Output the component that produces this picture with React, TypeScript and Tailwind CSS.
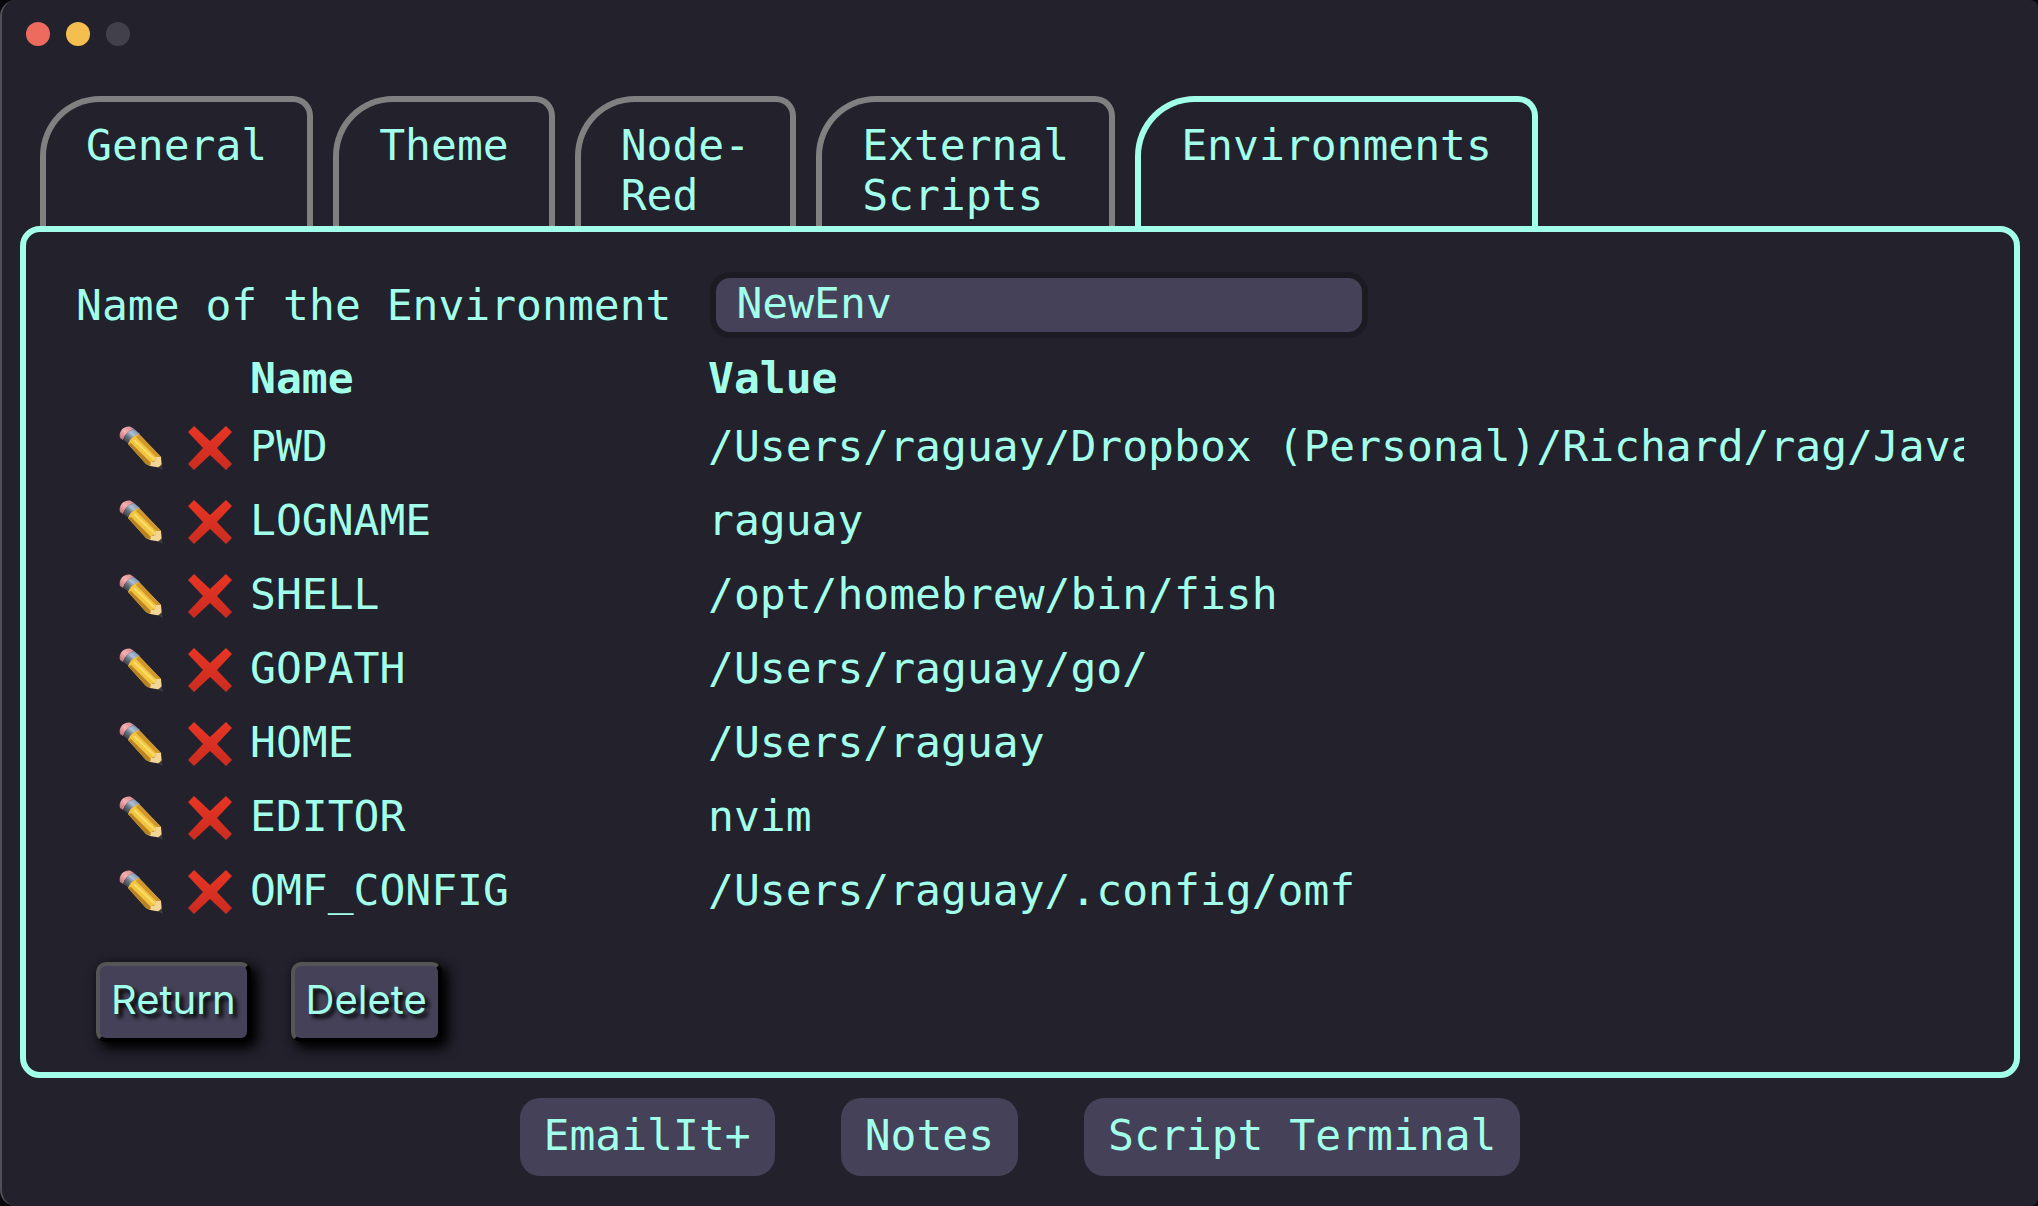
const tabs = ["General", "Theme", "Node-Red", "External Scripts", "Environments"];

const variables = [
  { name: "PWD", value: "/Users/raguay/Dropbox (Personal)/Richard/rag/JavaScript" },
  { name: "LOGNAME", value: "raguay" },
  { name: "SHELL", value: "/opt/homebrew/bin/fish" },
  { name: "GOPATH", value: "/Users/raguay/go/" },
  { name: "HOME", value: "/Users/raguay" },
  { name: "EDITOR", value: "nvim" },
  { name: "OMF_CONFIG", value: "/Users/raguay/.config/omf" },
];

const links = ["EmailIt+", "Notes", "Script Terminal"];

function PencilIcon() {
  return (
    <svg viewBox="0 0 44 44" className="size-11" aria-hidden="true">
      <defs>
        <linearGradient id="eraser" x1="0" y1="1" x2="1" y2="0">
          <stop offset="0" stopColor="#b5686c" />
          <stop offset="0.5" stopColor="#f6b0b0" />
          <stop offset="1" stopColor="#cf8588" />
        </linearGradient>
        <linearGradient id="ferrule" x1="0" y1="1" x2="1" y2="0">
          <stop offset="0.1" stopColor="#35363c" />
          <stop offset="0.4" stopColor="#6a7484" />
          <stop offset="0.6" stopColor="#b0c0d6" />
          <stop offset="1" stopColor="#5f7696" />
        </linearGradient>
      </defs>
      <path d="M1 12C-1 5 6 -1 12 1L15 3Q6 6 4 14L1 12Z" fill="url(#eraser)" />
      <path d="M15 3L21 8Q12 10 10 18L4 14Q6 6 15 3Z" fill="url(#ferrule)" />
      <path d="M20 8L42 31Q37 31 36 35 32 35 31 40L27 38 9 18Q12 10 20 8Z" fill="#f2c53f" />
      <path d="M20 8L42 31 38 32 17 11Z" fill="#cf972d" />
      <path d="M9 18L12 17 32 37 31 40 27 38Z" fill="#b98225" />
      <path d="M15 14L36 34" stroke="#fbdc6d" strokeWidth="2" />
      <path d="M42 31L43 42 31 40 32 36 36 35 37 31Z" fill="#f4d595" />
      <path d="M42.500 38L44 44 38.500 41.500Q41 41 42.500 38Z" fill="#3b3a3c" />
    </svg>
  );
}

function CrossIcon() {
  return (
    <svg viewBox="0 0 46 46" className="size-[46px]" aria-hidden="true">
      <defs>
        <linearGradient id="cross" x1="0" y1="0" x2="0" y2="1">
          <stop offset="0" stopColor="#e93524" />
          <stop offset="1" stopColor="#c92c20" />
        </linearGradient>
      </defs>
      <path
        d="M7 1L23 16 39 1 45 7 30 23 45 39 39 45 23 30 7 45 1 39 16 23 1 7Z"
        fill="url(#cross)"
      />
    </svg>
  );
}

function Tab({ label, active }: { label: string; active: boolean }) {
  return (
    <button
      type="button"
      role="tab"
      aria-selected={active}
      className={
        "flex w-min items-start rounded-tl-[60px] rounded-tr-[20px] border-6 border-b-0 px-10 pt-[18px] pb-1.5 text-left " +
        (active ? "border-[#a1ffea]" : "border-[#808080]")
      }
    >
      {label}
    </button>
  );
}

function ActionButton({ label }: { label: string }) {
  return (
    <button
      type="button"
      className="h-20 rounded-[10px] border-4 border-t-[#555555] border-l-[#555555] border-r-black border-b-black bg-[#454158] px-[11px] pb-1 font-['Inter',sans-serif] text-[40px] shadow-[5px_5px_12px_2px_black] [text-shadow:4px_4px_4px_black]"
    >
      {label}
    </button>
  );
}

export default function App() {
  return (
    <div className="bg-[#08080c]">
      <div className="flex min-h-screen flex-col rounded-l-[16px] rounded-r-[8px] border-l-2 border-[#505058] bg-[#22212c] pr-[18px] pl-[18px] font-['DejaVu_Sans_Mono',monospace] text-[43px] leading-[50px] text-[#a1ffea]">
        <header className="flex gap-4 px-1.5 pt-[22px]">
          <button type="button" aria-label="Close" className="size-6 rounded-full bg-[#ed6a5e]" />
          <button type="button" aria-label="Minimize" className="size-6 rounded-full bg-[#f5bf4f]" />
          <button type="button" aria-label="Zoom" className="size-6 rounded-full bg-[#42404b]" />
        </header>

        <div role="tablist" className="mt-[50px] flex gap-5 px-5">
          {tabs.map((tab) => (
            <Tab key={tab} label={tab} active={tab === "Environments"} />
          ))}
        </div>

        <main className="rounded-[20px] border-6 border-[#a1ffea] px-[50px] pt-10 pb-[30px]">
          <div className="flex items-center gap-[39px]">
            <label htmlFor="environment" className="whitespace-nowrap">
              Name of the Environment
            </label>
            <input
              id="environment"
              defaultValue="NewEnv"
              className="h-[66px] w-[658px] min-w-0 rounded-[20px] border-6 border-[#1c1a23] bg-[#454158] px-5 pb-1 outline-none"
            />
          </div>

          <table className="mt-2 w-full table-fixed">
            <thead>
              <tr className="h-[63px] text-left">
                <th className="w-[174px]" aria-label="Actions" />
                <th className="w-[458px]">Name</th>
                <th>Value</th>
              </tr>
            </thead>
            <tbody>
              {variables.map(({ name, value }) => (
                <tr key={name} className="h-[74px]">
                  <td>
                    <div className="flex items-center gap-6 pt-1 pl-[43px]">
                      <button type="button" aria-label={"Edit " + name}>
                        <PencilIcon />
                      </button>
                      <button type="button" aria-label={"Remove " + name}>
                        <CrossIcon />
                      </button>
                    </div>
                  </td>
                  <td>{name}</td>
                  <td className="overflow-hidden whitespace-nowrap">{value}</td>
                </tr>
              ))}
            </tbody>
          </table>

          <div className="mt-[35px] flex gap-10 px-5">
            <ActionButton label="Return" />
            <ActionButton label="Delete" />
          </div>
        </main>

        <footer className="flex justify-center gap-[66px] py-5">
          {links.map((link) => (
            <button key={link} type="button" className="h-[78px] rounded-[20px] bg-[#454158] px-6 pb-1">
              {link}
            </button>
          ))}
        </footer>
      </div>
    </div>
  );
}
